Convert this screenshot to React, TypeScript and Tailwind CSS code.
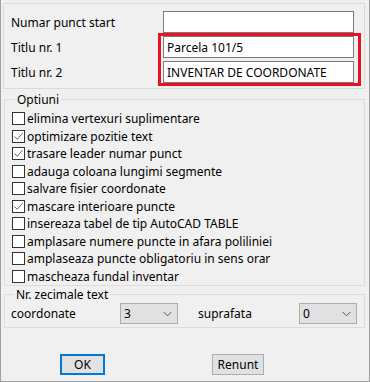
import React from "react";

const options: [string, boolean][] = [
  ["elimina vertexuri suplimentare", false],
  ["optimizare pozitie text", true],
  ["trasare leader numar punct", true],
  ["adauga coloana lungimi segmente", false],
  ["salvare fisier coordonate", false],
  ["mascare interioare puncte", true],
  ["insereaza tabel de tip AutoCAD TABLE", false],
  ["amplasare numere puncte in afara poliliniei", false],
  ["amplaseaza puncte obligatoriu in sens orar", false],
  ["mascheaza fundal inventar", false],
];

function Check({ checked }: { checked: boolean }) {
  return (
    <span className="flex h-[13px] w-[13px] shrink-0 items-center justify-center border border-[#333] bg-white">
      {checked && (
        <svg width="11" height="11" viewBox="0 0 11 11">
          <path d="M1.5 5.5 L4.2 8.3 L9.6 2.2" fill="none" stroke="#666" strokeWidth="1" />
        </svg>
      )}
    </span>
  );
}

function Combo({ value }: { value: string }) {
  return (
    <div className="flex h-[21px] w-[58px] items-center justify-between border border-[#adadad] bg-[#e1e1e1] pl-[3px] pr-[5px]">
      <span>{value}</span>
      <svg width="9" height="6" viewBox="0 0 9 6">
        <path d="M0.5 0.8 L4.5 4.8 L8.5 0.8" fill="none" stroke="#555" strokeWidth="1" />
      </svg>
    </div>
  );
}

export default function App() {
  return (
    <div
      className="relative flex h-[382px] w-[370px] flex-col border-x border-b border-[#a0a0a0] bg-[#f0f0f0] text-[12px] leading-[15px] text-black"
      style={{ fontFamily: '"Noto Sans", "Open Sans", sans-serif' }}
    >
      {/* titluri */}
      <div className="ml-[2px] mt-[3px] flex h-[86px] w-[362px] flex-col gap-[3px] border border-[#d9d9d9] pl-[7px] pt-[7px]">
        {[
          ["Numar punct start", ""],
          ["Titlu nr. 1", "Parcela 101/5"],
          ["Titlu nr. 2", "INVENTAR DE COORDONATE"],
        ].map(([label, value]) => (
          <div key={label} className="flex h-[22px] items-center">
            <span className="w-[152px]">{label}</span>
            <div className="flex h-[22px] w-[191px] items-center border border-[#7a7a7a] bg-white px-[3px]">
              {value}
            </div>
          </div>
        ))}
      </div>
      <div className="absolute left-[157px] top-[33px] h-[53px] w-[203px] border-[3px] border-[#e81123]" />

      {/* optiuni */}
      <fieldset className="ml-[3px] mt-[3px] w-[361px] border border-[#dcdcdc] pb-0 pl-[7px] pt-[3px]">
        <legend className="ml-[3px] px-[2px] leading-[15px]">Optiuni</legend>
        {options.map(([label, checked]) => (
          <div key={label} className="flex h-[17.5px] items-center gap-[2px]">
            <Check checked={checked} />
            <span>{label}</span>
          </div>
        ))}
      </fieldset>

      {/* zecimale */}
      <fieldset className="ml-[3px] mt-[1px] h-[41px] w-[361px] border border-[#dcdcdc] pl-[6px]">
        <legend className="ml-[3px] px-[2px] leading-[15px]">Nr. zecimale text</legend>
        <div className="mt-[1px] flex items-center">
          <span className="w-[109px]">coordonate</span>
          <Combo value="3" />
          <span className="ml-[20px] w-[101px]">suprafata</span>
          <Combo value="0" />
        </div>
      </fieldset>

      <div className="mt-[26px] flex">
        <button className="ml-[59px] h-[21px] w-[45px] border-2 border-[#0078d7] bg-[#e1e1e1]">OK</button>
        <button className="ml-[107px] h-[21px] w-[52px] border border-[#adadad] bg-[#e1e1e1]">Renunt</button>
      </div>
    </div>
  );
}
